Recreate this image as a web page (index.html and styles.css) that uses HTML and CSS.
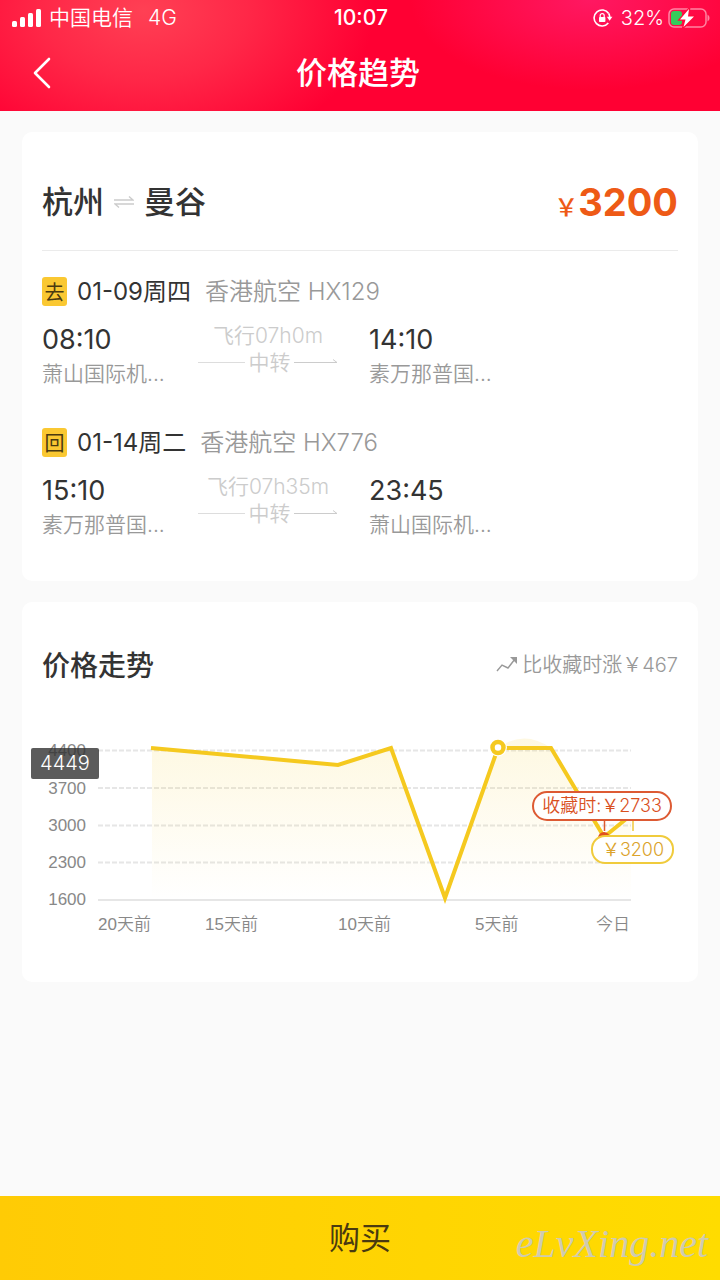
FILE: index.html
```html
<!doctype html>
<html lang="zh-CN">
<head>
<meta charset="utf-8">
<meta name="viewport" content="width=device-width, initial-scale=1.0">
<title>价格趋势</title>
<link rel="stylesheet" href="styles.css">
</head>
<body>
  <header class="header">
    <div class="status">
      <div class="status_left">
        <svg width="31" height="20" viewBox="0 0 31 20" fill="#fff">
          <rect x="0" y="13" width="5" height="6" rx="1.5"/>
          <rect x="8" y="9" width="5" height="10" rx="1.5"/>
          <rect x="16" y="5" width="5" height="14" rx="1.5"/>
          <rect x="24" y="1" width="5" height="18" rx="1.5"/>
        </svg>
        <span>中国电信</span>
        <span class="status_net">4G</span>
      </div>
      <span class="status_time">10:07</span>
      <div class="status_right">
        <svg width="20" height="18" viewBox="0 0 20 18" fill="none" stroke="#fff" stroke-width="1.6">
          <path d="M15.7 4.5A8 8 0 1 0 15.3 14"/>
          <path d="M15.7 4.5a8 8 0 0 1 1.1 4"/>
          <path d="M13.8 7.8h5.6l-2.8 4z" fill="#fff" stroke="none"/>
          <rect x="6" y="8" width="6.4" height="5" rx="0.8" fill="#fff" stroke="none"/>
          <path d="M7.2 8.5V6.6a2 2 0 0 1 4 0v1.9" stroke-width="1.2"/>
        </svg>
        <span class="status_power">32%</span>
        <svg width="42" height="20" viewBox="0 0 42 20">
          <rect x="1" y="1" width="37" height="18" rx="5" fill="none" stroke="#fff" stroke-opacity=".5" stroke-width="1.5"/>
          <path d="M39.5 6.5a4 4 0 0 1 0 7z" fill="#fff" fill-opacity=".5"/>
          <rect x="3" y="3" width="11" height="14" rx="3" fill="#35cb5b"/>
          <path d="M21 1L12 11.500h5.500L15.500 19 26 8.500h-6z" fill="#fff" stroke="#ff0a3c" stroke-width="2.500" paint-order="stroke"/>
        </svg>
      </div>
    </div>
    <div class="nav">
      <button class="nav_back" type="button" aria-label="返回">
        <svg width="18" height="32" viewBox="0 0 18 32" fill="none" stroke="#fff" stroke-width="2.6" stroke-linecap="round" stroke-linejoin="round"><path d="M16 2L2 16l14 14"/></svg>
      </button>
      <h1 class="nav_title">价格趋势</h1>
    </div>
  </header>

  <main class="main">
    <section class="card">
      <div class="route">
        <h2 class="route_city">
          <span>杭州</span>
          <svg width="20" height="12" viewBox="0 0 20 12" fill="none" stroke="#ccc" stroke-width="1.4"><path d="M0 4h19l-4-3.500M20 8H1l4 3.500"/></svg>
          <span>曼谷</span>
        </h2>
        <div class="route_price"><span class="route_unit">￥</span><span>3200</span></div>
      </div>

      <div class="leg">
        <div class="leg_head">
          <span class="leg_tag">去</span>
          <span class="leg_date">01-09周四</span>
          <span class="leg_air">香港航空 HX129</span>
        </div>
        <div class="leg_body">
          <div>
            <div class="leg_time">08:10</div>
            <div class="leg_port">萧山国际机...</div>
          </div>
          <div class="leg_mid">
            <div>飞行07h0m</div>
            <div class="leg_via">
              <i class="leg_line"></i>中转
              <svg width="44" height="7" viewBox="0 0 44 7" fill="none" stroke="#ccc"><path d="M0 3.500h43l-4-3"/></svg>
            </div>
          </div>
          <div class="leg_to">
            <div class="leg_time">14:10</div>
            <div class="leg_port">素万那普国...</div>
          </div>
        </div>
      </div>

      <div class="leg">
        <div class="leg_head">
          <span class="leg_tag">回</span>
          <span class="leg_date">01-14周二</span>
          <span class="leg_air">香港航空 HX776</span>
        </div>
        <div class="leg_body">
          <div>
            <div class="leg_time">15:10</div>
            <div class="leg_port">素万那普国...</div>
          </div>
          <div class="leg_mid">
            <div>飞行07h35m</div>
            <div class="leg_via">
              <i class="leg_line"></i>中转
              <svg width="44" height="7" viewBox="0 0 44 7" fill="none" stroke="#ccc"><path d="M0 3.500h43l-4-3"/></svg>
            </div>
          </div>
          <div class="leg_to">
            <div class="leg_time">23:45</div>
            <div class="leg_port">萧山国际机...</div>
          </div>
        </div>
      </div>
    </section>

    <section class="card">
      <div class="trend">
        <h2 class="trend_title">价格走势</h2>
        <div class="trend_diff">
          <svg width="22" height="18" viewBox="0 0 22 18" fill="none" stroke="#999" stroke-width="1.4"><path d="M1 15l5-6 6 3 7-9"/><path d="M14 1h7v7z" fill="#999" stroke="none"/></svg>
          <span>比收藏时涨￥467</span>
        </div>
      </div>
      <svg class="chart" viewBox="0 0 676 220">
        <defs>
          <linearGradient id="area" x1="0" y1="0" x2="0" y2="1">
            <stop offset="0" stop-color="#f8cf2c" stop-opacity=".14"/>
            <stop offset="1" stop-color="#f8cf2c" stop-opacity="0"/>
          </linearGradient>
        </defs>
        <!-- 网格 -->
        <path class="chart_grid" d="M76 20.500H609M76 58H609M76 95.500H609M76 132.500H609"/>
        <path class="chart_base" d="M76 170H609"/>
        <!-- 曲线 -->
        <path fill="url(#area)" d="M130 18L316 35L369 18L423 168L476 18Q502 -1 529 18L582 107L609 85V170H130Z"/>
        <path class="chart_line" d="M129 18L316 35L369 18L423 168L476 18H529L582 107L609 85"/>
        <circle cx="476" cy="17.500" r="9" fill="#fff"/>
        <circle cx="476" cy="17.500" r="5.500" fill="#fff" stroke="#f5c91f" stroke-width="4.500"/>
        <circle cx="582" cy="108" r="6" fill="#e0511f"/>
        <path d="M582.500 90V101" stroke="#dd5a33" stroke-width="1.500"/>
        <path d="M611 90V101" stroke="#f0c93c" stroke-width="1.500"/>
        <!-- 坐标 -->
        <g class="chart_axis" text-anchor="end">
          <text x="64" y="26">4400</text>
          <text x="64" y="64">3700</text>
          <text x="64" y="101">3000</text>
          <text x="64" y="138">2300</text>
          <text x="64" y="175">1600</text>
        </g>
        <g class="chart_axis">
          <text x="76" y="200">20天前</text>
          <text x="183" y="200">15天前</text>
          <text x="316" y="200">10天前</text>
          <text x="453" y="200">5天前</text>
          <text x="574" y="200">今日</text>
        </g>
        <!-- 提示 -->
        <rect x="9" y="18" width="68" height="31" rx="2" fill="#323232" fill-opacity=".8"/>
        <text class="chart_tip" x="43" y="40" text-anchor="middle">4449</text>
        <rect x="511" y="62" width="138" height="28" rx="14" fill="#fff" stroke="#dd5a33" stroke-width="2"/>
        <text class="chart_mark chart_mark-red" x="580" y="82" text-anchor="middle">收藏时:￥2733</text>
        <rect x="570" y="106" width="81" height="27" rx="13" fill="#fff" stroke="#f0cb3c" stroke-width="2"/>
        <text class="chart_mark chart_mark-gold" x="611" y="126" text-anchor="middle">￥3200</text>
      </svg>
    </section>
  </main>

  <footer class="footer">
    <button class="footer_buy" type="button">购买</button>
    <span class="footer_site">eLvXing.net</span>
  </footer>
</body>
</html>
```
FILE: styles.css
```css
* {
  margin: 0;
  padding: 0;
  box-sizing: border-box;
}
body {
  display: flex;
  flex-direction: column;
  min-height: 100vh;
  background-color: #fafafa;
  color: #333;
  font-family: Inter, "Noto Sans CJK SC", sans-serif;
}
svg {
  display: block;
}
button {
  border: none;
  background: none;
  font-family: inherit;
  cursor: pointer;
}
.header {
  height: 111px;
  color: #fff;
  background: radial-gradient(ellipse 230px 150px at 20% 10%, #ff4054, rgba(255, 56, 80, 0.7) 45%, rgba(255, 0, 51, 0)),
    radial-gradient(ellipse 180px 90px at 82% 0, #ff1862, rgba(255, 0, 51, 0)),
    #ff0033;
}
.status {
  display: grid;
  grid-template-columns: 1fr auto 1fr;
  height: 36px;
  padding: 0 10px 0 12px;
  font-size: 20px;
  line-height: 36px;
}
.status_left,
.status_right {
  display: flex;
  align-items: center;
}
.status_left {
  gap: 6px;
  font-size: 21px;
  font-weight: 350;
}
.status_net {
  margin-left: 9px;
}
.status_time {
  font-size: 21px;
  font-weight: 500;
}
.status_right {
  justify-content: flex-end;
}
.status_power {
  margin: 0 4px 0 8px;
  font-weight: 350;
}
.nav {
  display: grid;
  grid-template-columns: 80px 1fr 84px;
  align-items: center;
  height: 74px;
}
.nav_back {
  padding-left: 33px;
}
.nav_title {
  font-size: 31px;
  font-weight: 500;
  line-height: 40px;
  text-align: center;
}
.main {
  flex: 1;
  padding: 21px 22px;
}
.card {
  margin-bottom: 21px;
  padding: 0 20px 41px;
  border-radius: 10px;
  background-color: #fff;
}
.route {
  display: flex;
  align-items: center;
  justify-content: space-between;
  height: 119px;
  padding-top: 22px;
  border-bottom: 1px solid #ebebeb;
  line-height: 48px;
}
.route_city {
  display: flex;
  align-items: center;
  gap: 10px;
  font-size: 31px;
  font-weight: 500;
}
.route_price {
  display: flex;
  align-items: baseline;
  padding-top: 6px;
  color: #ee5a16;
  font-size: 38px;
  font-weight: 700;
}
.route_unit {
  font-size: 24px;
  font-weight: 500;
}
.leg {
  margin-top: 39px;
}
.route + .leg {
  margin-top: 26px;
}
.leg_head {
  display: flex;
  align-items: center;
  height: 29px;
  font-size: 24px;
  line-height: 29px;
}
.leg_tag {
  width: 25px;
  height: 29px;
  margin-right: 10px;
  border-radius: 3px;
  background-color: #fac832;
  color: #4a3a10;
  font-size: 20px;
  line-height: 32px;
  text-align: center;
}
.leg_date {
  margin-right: 14px;
}
.leg_air {
  color: #999;
  font-weight: 350;
}
.leg_body {
  display: grid;
  grid-template-columns: 156px 140px 1fr;
  margin-top: 16px;
}
.leg_time {
  font-size: 27px;
  line-height: 36px;
}
.leg_port {
  color: #999;
  font-size: 21px;
  font-weight: 350;
  line-height: 31px;
}
.leg_mid {
  color: #ccc;
  font-size: 21px;
  font-weight: 350;
  line-height: 27px;
  text-align: center;
}
.leg_via {
  display: flex;
  align-items: center;
  justify-content: space-between;
}
.leg_line {
  width: 47px;
  height: 1px;
  background-color: #ddd;
}
.leg_to {
  padding-left: 31px;
}
.trend {
  display: flex;
  align-items: center;
  justify-content: space-between;
  padding-top: 43px;
  line-height: 40px;
}
.trend_title {
  padding-top: 3px;
  font-size: 28px;
  font-weight: 500;
  line-height: 37px;
}
.trend_diff {
  display: flex;
  align-items: center;
  gap: 4px;
  color: #999;
  font-size: 20px;
  font-weight: 350;
}
/* 图表撑满卡片宽度 */
.chart {
  width: calc(100% + 40px);
  margin: 45px -20px -9px;
}
.chart_grid,
.chart_base {
  fill: none;
  stroke: #e6e6e6;
  stroke-width: 2;
}
.chart_grid {
  stroke-dasharray: 5 2;
}
.chart_line {
  fill: none;
  stroke: #f5c91f;
  stroke-width: 4;
}
.chart_axis {
  fill: #888;
  font-family: "Liberation Sans", "Noto Sans CJK SC", sans-serif;
  font-size: 17px;
  font-weight: 350;
}
.chart_tip {
  fill: #fff;
  font-size: 20px;
  font-weight: 350;
}
.chart_mark {
  font-size: 18px;
  font-weight: 350;
}
.chart_mark-red {
  fill: #d9501e;
}
.chart_mark-gold {
  fill: #dba32c;
}
.footer {
  position: relative;
  background: linear-gradient(90deg, #ffcb05, #ffdc00);
}
.footer_buy {
  width: 100%;
  height: 84px;
  padding-bottom: 5px;
  color: #4a3a10;
  font-size: 31px;
}
.footer_site {
  position: absolute;
  right: 12px;
  bottom: 12px;
  color: #cfcbb0;
  font: italic 40px/48px "Liberation Serif", serif;
}
```
